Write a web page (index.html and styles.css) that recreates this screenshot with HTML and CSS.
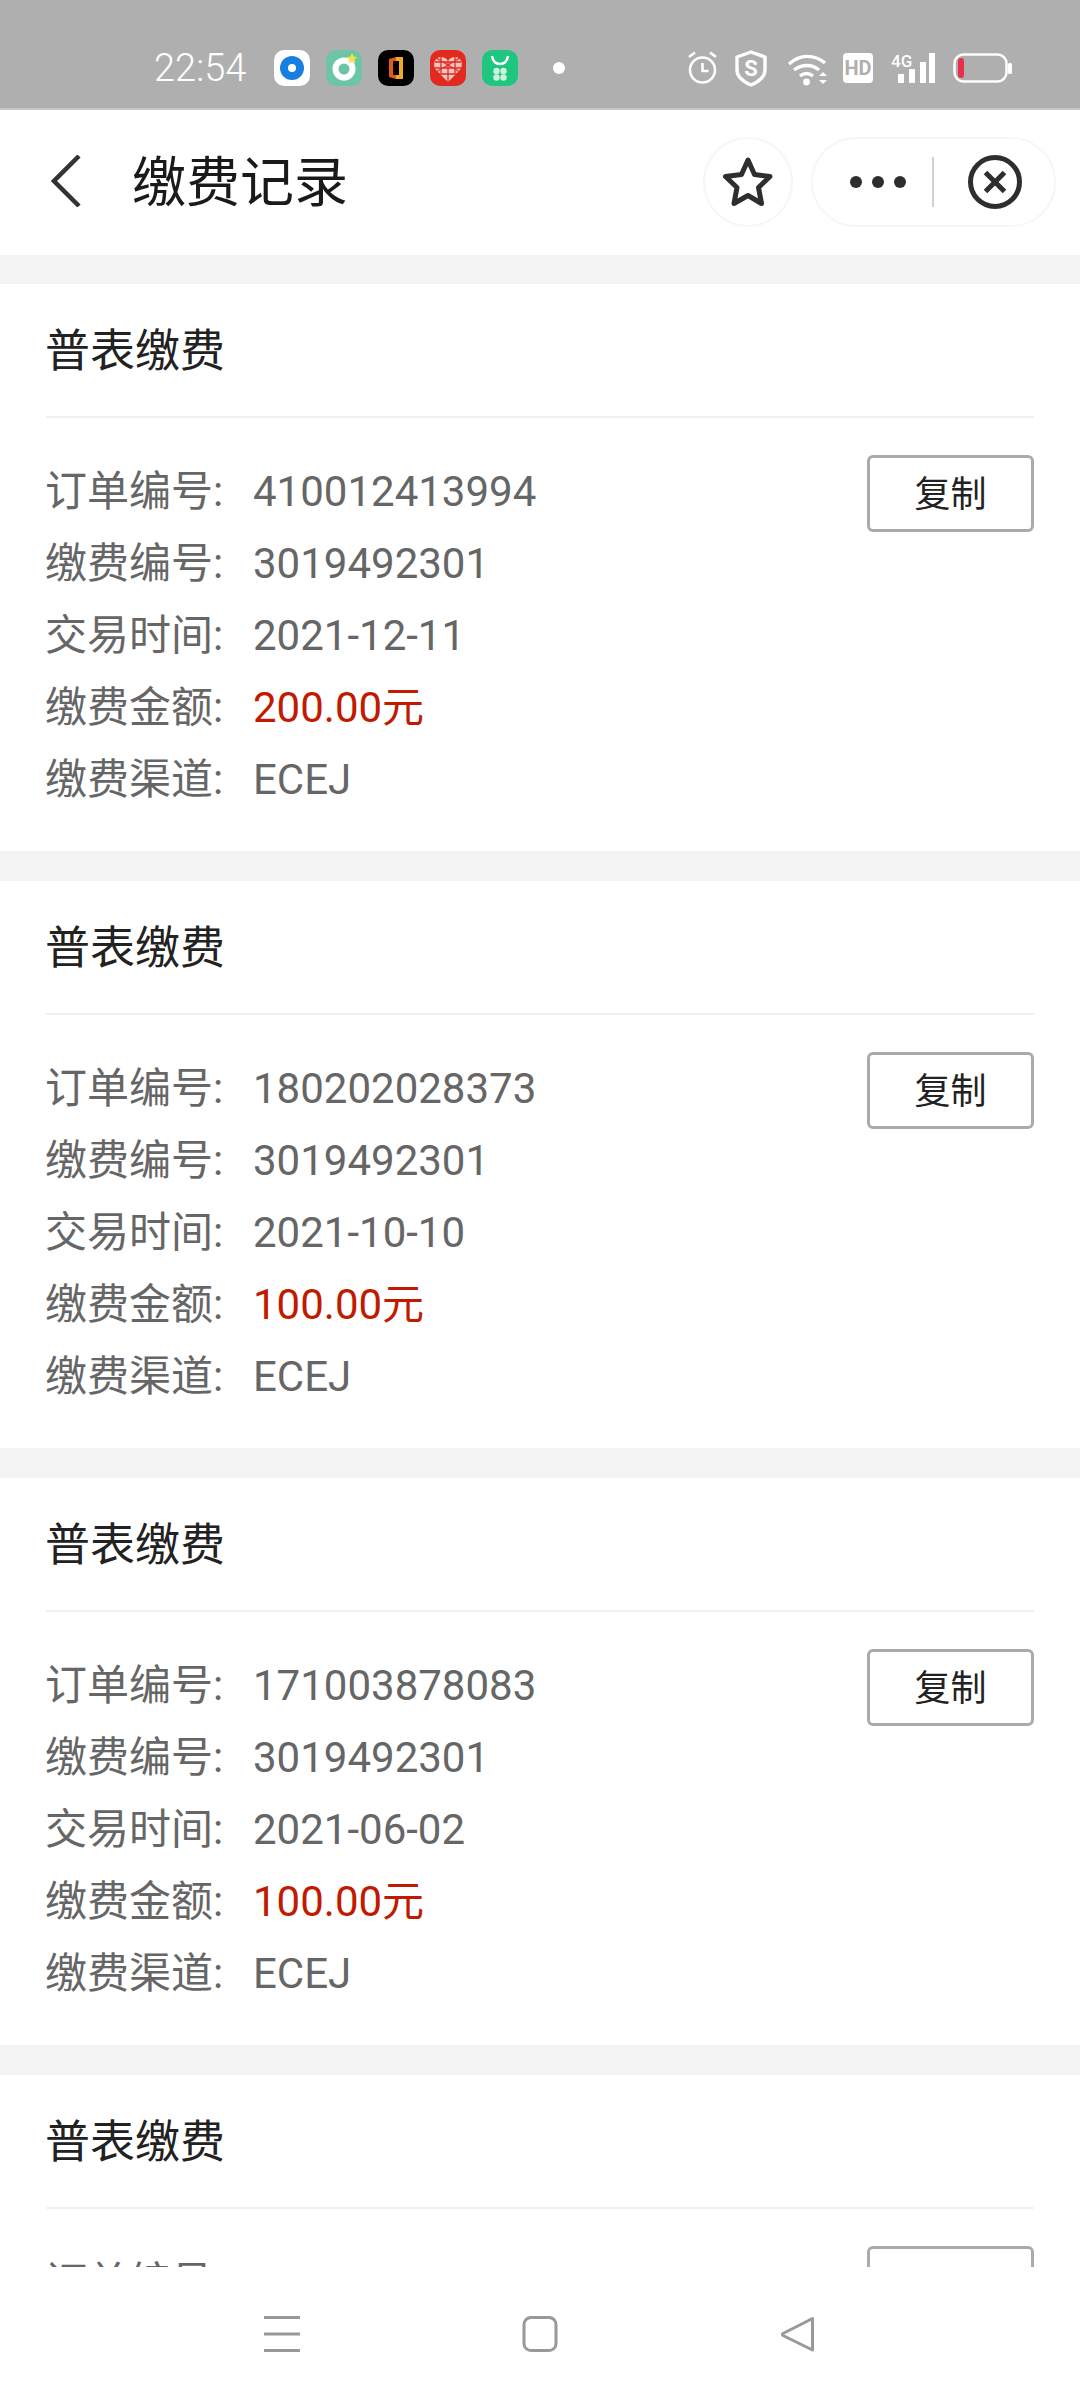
FILE: index.html
```html
<!DOCTYPE html>
<html lang="zh-CN">

<head>
    <meta charset="UTF-8">
    <meta name="viewport" content="width=device-width, initial-scale=1.0">
    <title>缴费记录</title>
    <link rel="stylesheet" href="styles.css">
</head>

<body>
    <div class="app">
        <div class="statusbar">
            <span class="time">22:54</span>
            <div class="app-icons">
                <svg width="36" height="36" viewBox="0 0 36 36">
                    <rect width="36" height="36" rx="10" fill="#fff" />
                    <circle cx="18" cy="18" r="12" fill="#1a7ee0" />
                    <circle cx="18" cy="18" r="4" fill="#fff" />
                </svg>
                <svg width="36" height="36" viewBox="0 0 36 36">
                    <rect width="36" height="36" rx="10" fill="#6cc6a6" />
                    <circle cx="18" cy="19" r="8.5" fill="none" stroke="#fff" stroke-width="6" />
                    <path d="M26 3l1.600 3.600 3.600.6-2.600 2.600.6 3.600-3.200-1.800-3.200 1.800.6-3.600-2.600-2.600 3.600-.6z" fill="#f5e04a" />
                </svg>
                <svg width="36" height="36" viewBox="0 0 36 36">
                    <rect width="36" height="36" rx="10" fill="#000" />
                    <path d="M11 9l7-2v4h-3v14h3v4l-7-2z" fill="#e2591a" />
                    <path d="M18 7h7v22h-7v-4h3V11h-3z" fill="#f0ab24" />
                </svg>
                <svg width="36" height="36" viewBox="0 0 36 36">
                    <rect width="36" height="36" rx="10" fill="#e32a1f" />
                    <path d="M18 32L6 20C2 14 5 7 11 7c3 0 5 1 7 4 2-3 4-4 7-4 6 0 9 7 5 13z" fill="#f3c6c1" />
                    <path d="M11 7v17M25 7v17M5 12h26M5 18h26M9 24h18M6 8l24 14M30 8L6 22M18 11v21" stroke="#e32a1f" stroke-width="1.300" fill="none" />
                </svg>
                <svg width="36" height="36" viewBox="0 0 36 36">
                    <rect width="36" height="36" rx="10" fill="#1fc67f" />
                    <path d="M10 6c1 6 4 8 8 8s7-2 8-8" fill="none" stroke="#fff" stroke-width="2.400" />
                    <circle cx="14.500" cy="21" r="3.200" fill="#cdf3e0" />
                    <circle cx="21.500" cy="21" r="3.200" fill="#cdf3e0" />
                    <circle cx="14.500" cy="27.500" r="3.200" fill="#cdf3e0" />
                    <circle cx="21.500" cy="27.500" r="3.200" fill="#cdf3e0" />
                </svg>
            </div>
            <span class="notif-dot"></span>
            <div class="sys-icons">
                <svg width="32" height="40" viewBox="0 0 32 40">
                    <circle cx="14.500" cy="22" r="12.500" fill="none" stroke="#fff" stroke-width="2.600" />
                    <path d="M14.500 15v8h6" fill="none" stroke="#fff" stroke-width="2.600" />
                    <path d="M1 9l6-4.500M28 9l-6-4.500" fill="none" stroke="#fff" stroke-width="2.600" />
                </svg>
                <svg width="32" height="40" viewBox="0 0 32 40">
                    <path d="M16 4l14 5v13c0 8-7 12-14 15C9 34 2 30 2 22V9z" fill="none" stroke="#fff" stroke-width="3.400" stroke-linejoin="round" />
                    <text x="16" y="28" text-anchor="middle" class="shield-s">S</text>
                </svg>
                <svg width="46" height="40" viewBox="0 0 46 40">
                    <path d="M7 16c11-10 25-10 36-1M12 22c8-6 18-6 25 0M18 28c4-3 9-3 13 0" fill="none" stroke="#fff" stroke-width="3.400" />
                    <circle cx="24.500" cy="34" r="3.400" fill="#fff" />
                    <path d="M41 24l4 4h-8zM41 36l4-4h-8z" fill="#fff" />
                </svg>
                <svg width="30" height="40" viewBox="0 0 30 40">
                    <rect y="5" width="30" height="30" rx="4" fill="#fff" />
                    <text x="15" y="27" text-anchor="middle" class="hd-text">HD</text>
                </svg>
                <svg width="47" height="40" viewBox="0 0 47 40">
                    <text x="3" y="19" class="net-text">4G</text>
                    <rect x="10" y="26" width="6" height="9" fill="#fff" />
                    <rect x="21" y="21" width="6" height="14" fill="#fff" />
                    <rect x="32" y="14" width="6" height="21" fill="#fff" />
                    <rect x="41" y="5" width="6" height="30" fill="#fff" />
                </svg>
                <svg width="62" height="40" viewBox="0 0 62 40">
                    <rect x="4.500" y="6.500" width="52" height="27" rx="9" fill="none" stroke="#fff" stroke-width="2.500" />
                    <rect x="58" y="15" width="4" height="11" rx="1.500" fill="#fff" />
                    <rect x="8" y="10" width="6" height="20" rx="3" fill="#e8304a" />
                </svg>
            </div>
        </div>

        <nav class="navbar">
            <svg class="back" width="30" height="52" viewBox="0 0 30 52">
                <path d="M28 1L3 26l25 25" fill="none" stroke="#333" stroke-width="4.500" />
            </svg>
            <div class="page-title">缴费记录</div>
            <div class="round-btn">
                <svg width="52" height="52" viewBox="0 0 52 52">
                    <path d="M26 4l6.500 14.500 15.500 2-11.500 11 3 16L26 39.500 12 47.500l3-16L3.500 20.500l16-2z" fill="none" stroke="#2e2e2e" stroke-width="5" stroke-linejoin="round" />
                </svg>
            </div>
            <div class="capsule">
                <div class="dots"><span></span><span></span><span></span></div>
                <span class="capsule-sep"></span>
                <svg class="close-icon" width="56" height="56" viewBox="0 0 56 56">
                    <circle cx="28" cy="28" r="24.500" fill="none" stroke="#2e2e2e" stroke-width="5" />
                    <path d="M18.500 18.500l19 19M37.500 18.500l-19 19" fill="none" stroke="#2e2e2e" stroke-width="5" />
                </svg>
            </div>
        </nav>

        <div class="list">
            <div class="card">
                <div class="card-head">普表缴费</div>
                <div class="card-body">
                    <div class="rows">
                        <div class="row"><span class="label">订单编号:</span>410012413994</div>
                        <div class="row"><span class="label">缴费编号:</span>3019492301</div>
                        <div class="row"><span class="label">交易时间:</span>2021-12-11</div>
                        <div class="row"><span class="label">缴费金额:</span><span class="amount">200.00元</span></div>
                        <div class="row"><span class="label">缴费渠道:</span>ECEJ</div>
                    </div>
                    <button class="copy-btn">复制</button>
                </div>
            </div>
            <div class="card">
                <div class="card-head">普表缴费</div>
                <div class="card-body">
                    <div class="rows">
                        <div class="row"><span class="label">订单编号:</span>180202028373</div>
                        <div class="row"><span class="label">缴费编号:</span>3019492301</div>
                        <div class="row"><span class="label">交易时间:</span>2021-10-10</div>
                        <div class="row"><span class="label">缴费金额:</span><span class="amount">100.00元</span></div>
                        <div class="row"><span class="label">缴费渠道:</span>ECEJ</div>
                    </div>
                    <button class="copy-btn">复制</button>
                </div>
            </div>
            <div class="card">
                <div class="card-head">普表缴费</div>
                <div class="card-body">
                    <div class="rows">
                        <div class="row"><span class="label">订单编号:</span>171003878083</div>
                        <div class="row"><span class="label">缴费编号:</span>3019492301</div>
                        <div class="row"><span class="label">交易时间:</span>2021-06-02</div>
                        <div class="row"><span class="label">缴费金额:</span><span class="amount">100.00元</span></div>
                        <div class="row"><span class="label">缴费渠道:</span>ECEJ</div>
                    </div>
                    <button class="copy-btn">复制</button>
                </div>
            </div>
            <div class="card">
                <div class="card-head">普表缴费</div>
                <div class="card-body">
                    <div class="rows">
                        <div class="row"><span class="label">订单编号:</span>160201460749</div>
                    </div>
                    <button class="copy-btn">复制</button>
                </div>
            </div>
        </div>

        <div class="bottom-nav">
            <svg width="36" height="36" viewBox="0 0 36 36">
                <path d="M0 1.500h36M0 18h36M0 34.500h36" stroke="#999" stroke-width="3" />
            </svg>
            <svg width="36" height="36" viewBox="0 0 36 36">
                <rect x="2" y="1.500" width="32" height="33" rx="7" fill="none" stroke="#999" stroke-width="3" />
            </svg>
            <svg width="36" height="36" viewBox="0 0 36 36">
                <path d="M32.500 2.500L3 17.500c-.8.600-.8 1.400 0 2L32.500 34z" fill="none" stroke="#999" stroke-width="3" stroke-linejoin="round" />
            </svg>
        </div>
    </div>
</body>

</html>
```

FILE: styles.css
```css
/* Reset and base styling */
* {
    margin: 0;
    padding: 0;
    box-sizing: border-box;
}

body {
    font-family: Roboto, 'Noto Sans CJK SC', sans-serif;
    background: #ffffff;
}

.app {
    width: 1080px;
    height: 2400px;
    display: flex;
    flex-direction: column;
    overflow: hidden;
}

/* Status bar */
.statusbar {
    height: 110px;
    flex-shrink: 0;
    padding: 28px 68px 0 154px;
    background-color: #afafaf;
    border-bottom: 2px solid #c6c6c6;
    display: flex;
    align-items: center;
}

.time {
    width: 120px;
    color: #ffffff;
    font-size: 38px;
    font-weight: 300;
}

.app-icons {
    display: flex;
    gap: 16px;
}

.notif-dot {
    width: 12px;
    height: 12px;
    margin-left: 35px;
    border-radius: 50%;
    background: #ffffff;
}

.sys-icons {
    margin-left: auto;
    display: flex;
    align-items: center;
    gap: 15px;
}

.shield-s {
    fill: #fff;
    font-family: Roboto, sans-serif;
    font-size: 22px;
    font-weight: 700;
}

.hd-text {
    fill: #afafaf;
    font-family: Roboto, sans-serif;
    font-size: 20px;
    font-weight: 700;
}

.net-text {
    fill: #fff;
    font-family: Roboto, sans-serif;
    font-size: 17px;
    font-weight: 500;
}

/* Navigation bar */
.navbar {
    height: 145px;
    flex-shrink: 0;
    padding: 0 24px 2px 51px;
    background: #ffffff;
    display: flex;
    align-items: center;
}

.back {
    margin-bottom: 2px;
}

.page-title {
    margin-left: 51px;
    padding-bottom: 6px;
    flex: 1;
    color: #1a1a1a;
    font-size: 54px;
}

.round-btn {
    width: 90px;
    height: 90px;
    border: 2px solid #f6f6f6;
    border-radius: 50%;
    display: flex;
    justify-content: center;
    align-items: center;
}

.capsule {
    width: 245px;
    height: 90px;
    margin-left: 18px;
    padding: 0 31px 0 37px;
    border: 2px solid #f6f6f6;
    border-radius: 45px;
    display: flex;
    align-items: center;
}

.dots {
    display: flex;
    gap: 10px;
}

.dots span {
    width: 12px;
    height: 12px;
    border-radius: 50%;
    background: #2e2e2e;
}

.capsule-sep {
    width: 2px;
    height: 50px;
    margin-left: 26px;
    background: #d0d0d0;
}

.close-icon {
    margin-left: auto;
}

/* Record list */
.list {
    flex: 1;
    min-height: 0;
    padding-top: 29px;
    overflow: hidden;
    background: #f3f3f3;
    display: flex;
    flex-direction: column;
    gap: 30px;
}

.card {
    flex-shrink: 0;
    height: 567px;
    padding: 0 46px;
    background: #ffffff;
}

.card-head {
    height: 134px;
    border-bottom: 2px solid #f0f0f0;
    color: #222222;
    font-size: 45px;
    line-height: 136px;
    text-indent: -1px;
}

.card-body {
    padding-top: 37px;
    display: flex;
    justify-content: space-between;
    align-items: flex-start;
}

.rows {
    margin-left: -1px;
}

.row {
    height: 72px;
    color: #666666;
    font-size: 42px;
    line-height: 74px;
    white-space: nowrap;
}

.label {
    display: inline-block;
    width: 208px;
}

.amount {
    color: #c01a00;
}

.copy-btn {
    width: 167px;
    height: 77px;
    padding-bottom: 5px;
    border: 3px solid #aaaaaa;
    border-radius: 6px;
    background: #ffffff;
    color: #222222;
    font-family: inherit;
    font-size: 36px;
}

/* System navigation */
.bottom-nav {
    height: 133px;
    flex-shrink: 0;
    padding-top: 1px;
    background: #ffffff;
    display: flex;
    justify-content: center;
    align-items: center;
    gap: 222px;
}
```
